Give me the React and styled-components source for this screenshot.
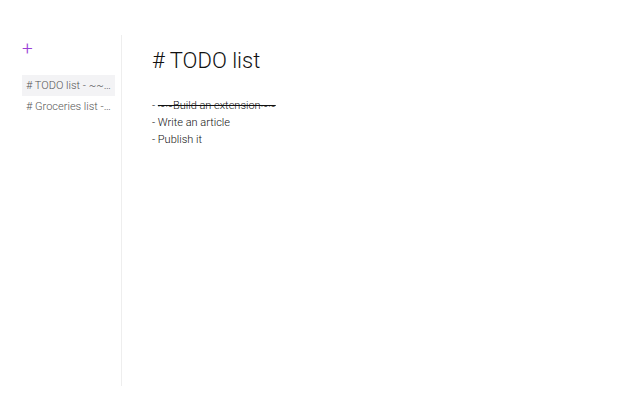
import styled, { createGlobalStyle } from 'styled-components'

const notes = [
    { title: '# TODO list - ~~Build an extension~~', active: true },
    { title: '# Groceries list - milk, eggs', active: false },
]

const App = () => {
    return (
        <>
            <GlobalStyle />
            <Wrapper>
                <Sidebar>
                    <AddButton>+</AddButton>
                    <NoteList>
                        {notes.map(note => (
                            <NoteItem key={note.title} $active={note.active}>{note.title}</NoteItem>
                        ))}
                    </NoteList>
                </Sidebar>
                <Editor>
                    <Heading># TODO list</Heading>
                    <Lines>
                        <Line>- <Strike>~~Build an extension~~</Strike></Line>
                        <Line>- Write an article</Line>
                        <Line>- Publish it</Line>
                    </Lines>
                </Editor>
            </Wrapper>
        </>
    )
}

const GlobalStyle = createGlobalStyle`
body{
    margin:0;
    background:#fff;
    font-family: Roboto, "Liberation Sans", sans-serif;
}
`
const Wrapper = styled.div`
display:flex;
height:400px;
padding:35px 0 14px 20px;
box-sizing:border-box;
`
const Sidebar = styled.div`
width:101px;
border-right:1px solid #eee;
display:flex;
flex-direction:column;
`
const AddButton = styled.div`
color:#9b3fd6;
font-size:19px;
font-weight:300;
line-height:24px;
padding:2px 0 0 2px;
`
const NoteList = styled.div`
margin-top:14px;
margin-right:6px;
`
const NoteItem = styled.div`
height:21px;
line-height:21px;
padding:0 4px;
margin-left:2px;
font-size:11px;
font-weight:300;
color:#555;
white-space:nowrap;
overflow:hidden;
text-overflow:ellipsis;
background-color:${props => props.$active ? '#f3f3f5' : 'transparent'};
`
const Editor = styled.div`
flex:1;
padding-left:30px;
`
const Heading = styled.h1`
margin:9px 0 0;
font-size:22px;
font-weight:300;
line-height:34px;
color:#111;
`
const Lines = styled.div`
margin-top:19px;
`
const Line = styled.div`
font-size:11px;
line-height:17px;
color:#111;
font-weight:300;
`
const Strike = styled.span`
text-decoration:line-through;
`

export default App
